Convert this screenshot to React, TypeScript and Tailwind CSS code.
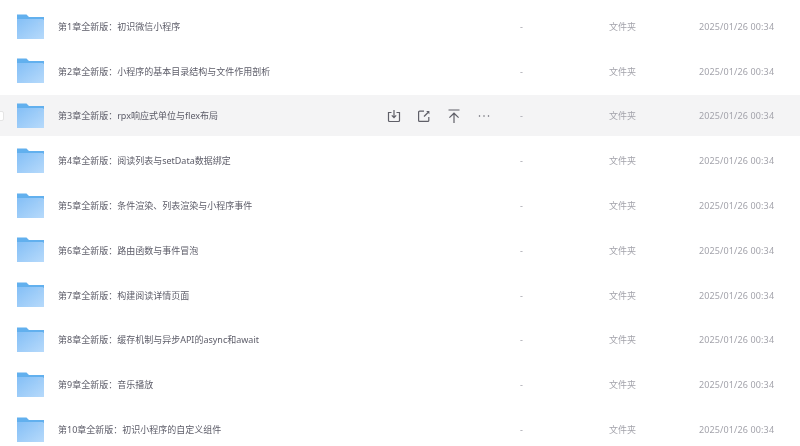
import React from 'react';

const ROWS = [
  '第1章全新版\uFF1A初识微信小程序',
  '第2章全新版\uFF1A小程序的基本目录结构与文件作用剖析',
  '第3章全新版\uFF1Arpx响应式单位与flex布局',
  '第4章全新版\uFF1A阅读列表与setData数据绑定',
  '第5章全新版\uFF1A条件渲染、列表渲染与小程序事件',
  '第6章全新版\uFF1A路由函数与事件冒泡',
  '第7章全新版\uFF1A构建阅读详情页面',
  '第8章全新版\uFF1A缓存机制与异步API的async和await',
  '第9章全新版\uFF1A音乐播放',
  '第10章全新版\uFF1A初识小程序的自定义组件',
];

const FolderIcon = ({ id }: { id: number }) => (
  <svg width="27" height="25" viewBox="0 0 27 25" className="shrink-0">
    <defs>
      <linearGradient id={`folder-${id}`} x1="0" y1="0" x2="1" y2="1">
        <stop offset="0" stopColor="#84bff6" />
        <stop offset="1" stopColor="#b7dafb" />
      </linearGradient>
    </defs>
    <path d="M0 .5h9.5L12 3h15v5H0z" fill="#62b0ee" />
    <path d="M0 5h25.5L27 6V25H0z" fill={`url(#folder-${id})`} />
    <rect x="21" y="8.5" width="3" height="2" fill="#a4cdf5" />
  </svg>
);

const RowActions = () => (
  <div className="ml-[10px] flex items-center gap-[16px] text-[#5f5f68]">
    <svg width="14" height="14" viewBox="0 0 14 14" fill="none" stroke="currentColor" strokeWidth="1.2">
      <path d="M4.5 3.5H1.5v8a1 1 0 0 0 1 1h9a1 1 0 0 0 1-1v-8h-3" />
      <path d="M7 1v7.5M4.8 6.4 7 8.6l2.2-2.2" />
    </svg>
    <svg width="14" height="14" viewBox="0 0 14 14" fill="none" stroke="currentColor" strokeWidth="1.2">
      <path d="M7 2.2H2.6a1 1 0 0 0-1 1v8.2a1 1 0 0 0 1 1h8.2a1 1 0 0 0 1-1V8" />
      <path d="M7 7.5 11 3.5" />
      <path d="M9.2 2h3.2v3.2z" fill="currentColor" stroke="none" />
    </svg>
    <svg width="14" height="14" viewBox="0 0 14 14" fill="none" stroke="currentColor" strokeWidth="1.2">
      <path d="M1.5 1h11M7 4.2V14M2.4 8.6 7 4.2l4.6 4.4" />
    </svg>
    <svg width="14" height="14" viewBox="0 0 14 14" fill="currentColor">
      <circle cx="2.5" cy="7" r=".75" />
      <circle cx="7" cy="7" r=".75" />
      <circle cx="11.5" cy="7" r=".75" />
    </svg>
  </div>
);

export default function App() {
  return (
    <div className="h-[446px] w-[800px] overflow-hidden bg-white pt-[5.5px] font-['Noto_Sans','Noto_Sans_CJK_SC',sans-serif] text-[9px] blur-[0.4px]">
      {ROWS.map((title, i) => {
        const hovered = i === 2;
        return (
          <div
            key={title}
            className={`relative mb-[3.8px] flex h-[41px] items-center pl-[17px] ${hovered ? 'bg-[#f4f4f5]' : ''}`}
          >
            {hovered && (
              <div className="absolute left-[-8px] top-[15.5px] h-[10px] w-[12px] rounded-[2px] border border-[#e5e5e5] bg-white" />
            )}
            <FolderIcon id={i} />
            <div className="ml-[14px] w-[319px] shrink-0 truncate pt-[1px] text-[#5c5c68]">{title}</div>
            <div className="w-[143px] shrink-0">{hovered && <RowActions />}</div>
            <div className="w-[89px] shrink-0 pt-[1px] text-[#a3a3ab]">-</div>
            <div className="w-[90px] shrink-0 pt-[1px] text-[#a3a3ab]">文件夹</div>
            <div className="shrink-0 pt-[1px] tracking-[0.12px] text-[#a3a3ab]">2025/01/26 00:34</div>
          </div>
        );
      })}
    </div>
  );
}
